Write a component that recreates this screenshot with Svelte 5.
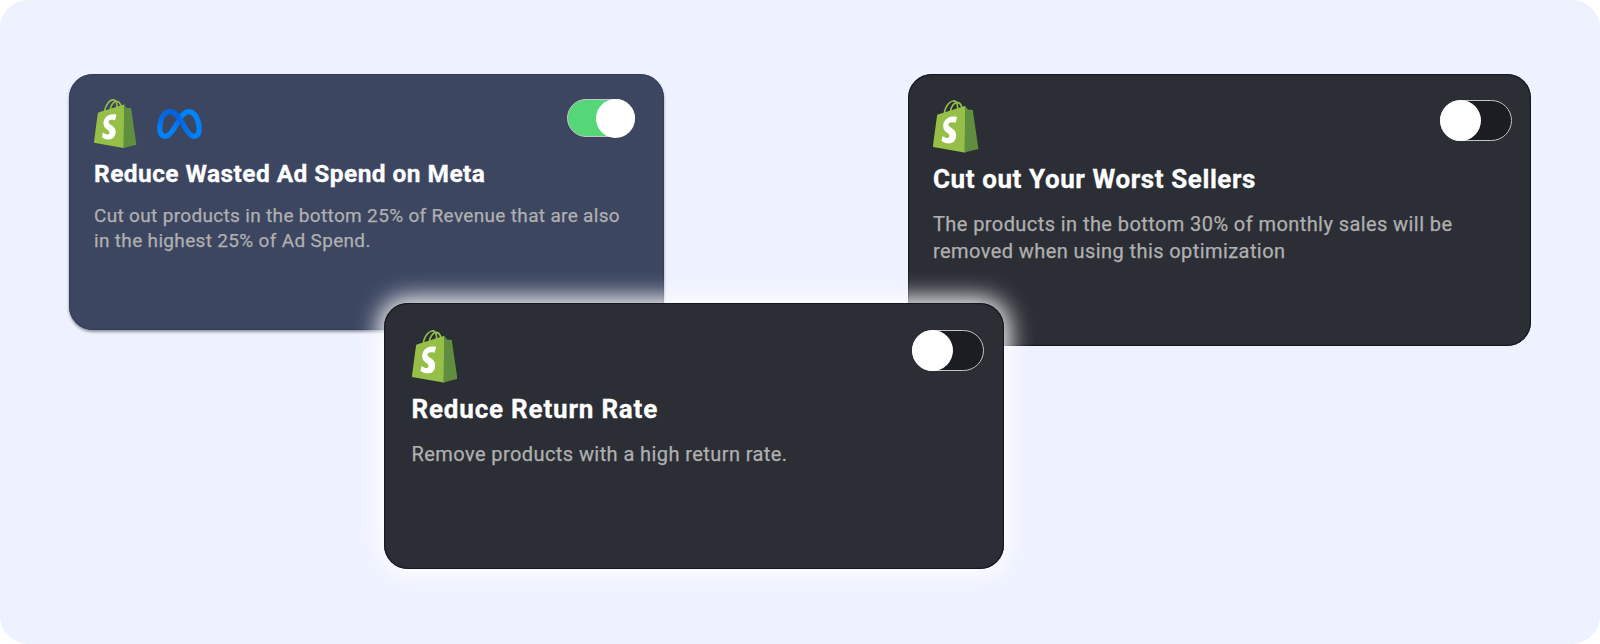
<script>
  const cards = [
    {
      id: 'meta',
      title: 'Reduce Wasted Ad Spend on Meta',
      lines: ['Cut out products in the bottom 25% of Revenue that are also', 'in the highest 25% of Ad Spend.'],
      meta: true,
      on: true
    },
    {
      id: 'sellers',
      title: 'Cut out Your Worst Sellers',
      lines: ['The products in the bottom 30% of monthly sales will be', 'removed when using this optimization'],
      meta: false,
      on: false
    },
    {
      id: 'returns',
      title: 'Reduce Return Rate',
      lines: ['Remove products with a high return rate.'],
      meta: false,
      on: false
    }
  ];

  let active = $state(Object.fromEntries(cards.map((c) => [c.id, c.on])));
</script>

{#snippet shopify()}
  <svg class="shopify" viewBox="0 0 109.5 124.5" preserveAspectRatio="none" aria-hidden="true">
    <path d="M20 36h41v69H18z" fill="#fff" />
    <path fill="#95bf47" d="M74.7,14.8c0,0-1.4,0.4-3.7,1.1c-0.4-1.3-1-2.8-1.8-4.4c-2.6-5-6.5-7.7-11.1-7.7c-0.3,0-0.6,0-1,0.1c-0.1-0.2-0.3-0.3-0.4-0.5c-2-2.2-4.6-3.2-7.7-3.1c-6,0.2-12,4.5-16.8,12.2c-3.4,5.4-6,12.2-6.7,17.5c-6.9,2.1-11.7,3.6-11.8,3.7c-3.5,1.1-3.6,1.2-4,4.5C9.1,40.7,0,111.2,0,111.2l75.6,13.1h2.8V14L74.7,14.8zM57.2,20.2c-4,1.2-8.4,2.6-12.7,3.9c1.2-4.7,3.6-9.4,6.4-12.5c1.1-1.1,2.6-2.4,4.3-3.2C56.9,12,57.3,16.9,57.2,20.2zM49.1,4.3c1.4,0,2.6,0.3,3.6,0.9c-1.6,0.8-3.2,2.1-4.7,3.6c-3.8,4.1-6.7,10.5-7.9,16.6c-3.6,1.1-7.2,2.2-10.5,3.2C31.7,19.1,39.8,4.6,49.1,4.3zM37.4,59.3c0.4,6.4,17.3,7.8,18.3,22.9c0.7,11.9-6.3,20-16.4,20.6c-12.2,0.8-18.9-6.4-18.9-6.4l2.6-11c0,0,6.7,5.1,12.1,4.7c3.5-0.2,4.8-3.1,4.7-5.1c-0.5-8.4-14.3-7.9-15.2-21.7C23.8,51.8,31.4,40.1,48.2,39c6.5-0.4,9.8,1.2,9.8,1.2l-3.8,14.4c0,0-4.3-2-9.4-1.6C37.4,53.5,37.3,58.2,37.4,59.3zM61.2,19c0-3-0.4-7.3-1.8-10.9c4.6,0.9,6.8,6,7.8,9.1C65.4,17.7,63.4,18.3,61.2,19z" />
    <path fill="#5e8e3e" d="M75.6,124.3l33.9-8.2c0,0-13.5-91.3-13.6-91.9c-0.1-0.6-0.6-1-1.1-1c-0.5,0-9.3-0.2-9.3-0.2s-5.4-5.2-7.4-7.2z" />
  </svg>
{/snippet}

{#snippet card(c)}
  <article class="card {c.id}">
    <header>
      <div class="icons">
        {@render shopify()}
        {#if c.meta}
          <svg class="meta-logo" viewBox="0 0 134 90" aria-hidden="true">
            <defs>
              <linearGradient id="loopLeft" x1="0" y1="0" x2="0" y2="1">
                <stop offset=".2" stop-color="#0668e1" />
                <stop offset=".75" stop-color="#0082fb" />
              </linearGradient>
              <linearGradient id="loopRight" x1="0" y1="0" x2="1" y2="0">
                <stop offset=".3" stop-color="#0064e0" />
                <stop offset=".85" stop-color="#0082fb" />
              </linearGradient>
            </defs>
            <path d="M68 30C76 16 84 8 95 8C112 8 126 32 126 60" stroke="#0082fb" />
            <path d="M68 30L48 62C40 75 34 82 24 82C13 82 8 73 8 58C8 30 20 8 39 8" stroke="url(#loopLeft)" />
            <path d="M38 8C52 8 61 19 74 40L86 60C95 75 101 82 110 82C121 82 126 74 126 60" stroke="url(#loopRight)" />
          </svg>
        {/if}
      </div>
      <button
        class="toggle"
        class:on={active[c.id]}
        role="switch"
        aria-checked={active[c.id]}
        aria-label={c.title}
        onclick={() => (active[c.id] = !active[c.id])}
      >
        <span class="knob"></span>
      </button>
    </header>
    <h2>{c.title}</h2>
    <p>{#each c.lines as line}<span>{line}</span>{/each}</p>
  </article>
{/snippet}

<main class="stage">
  {@render card(cards[0])}
  {@render card(cards[1])}
  {@render card(cards[2])}
</main>

<style>
  :global(body) { background: #fff; }

  .stage {
    position: relative;
    box-sizing: border-box;
    width: 1600px;
    height: 644px;
    padding: 74px 69px 0 68.5px;
    display: flex;
    justify-content: space-between;
    align-items: flex-start;
    background: #eef2ff;
    border-radius: 28px;
    overflow: hidden;
    font-family: Roboto, 'Open Sans', sans-serif;
  }

  .card {
    box-sizing: border-box;
    width: 623px;
    height: 272px;
    padding: 26px 19px 0 25px;
    border-radius: 24px;
    background: #2c2e36;
    box-shadow: inset 0 0 1px 1px #14161f;
  }
  .card.meta {
    width: 595.5px;
    height: 256px;
    padding: 25px 29px 0 25.5px;
    background: #3c4661;
    box-shadow: inset 0 0 1px .5px #2b3655, 0 2px 3px rgba(0, 0, 0, .4);
  }
  .card.returns {
    position: absolute;
    left: 384px;
    top: 303px;
    width: 620px;
    height: 266px;
    padding: 27px 20.5px 0 27.5px;
    box-shadow: inset 0 0 1px 1px #14161f, 0 0 24px 5px #fff;
  }

  header { display: flex; justify-content: space-between; align-items: flex-start; }
  .icons { display: flex; gap: 20.5px; }
  .shopify { display: block; width: 45.5px; height: 52.5px; margin-bottom: .5px; }
  .meta .shopify { width: 42.5px; height: 49px; margin-bottom: 1px; }
  .meta-logo { width: 45px; height: 30px; margin-top: 10px; fill: none; stroke-width: 15.5; }

  .toggle {
    box-sizing: border-box;
    width: 72px;
    height: 41px;
    padding: 0;
    display: flex;
    align-items: center;
    border: 1px solid #c4c4c4;
    border-radius: 21px;
    background: #1c1d23;
    cursor: pointer;
  }
  .knob { width: 41px; height: 41px; margin: -1px; border-radius: 50%; background: #fff; flex: none; }
  .toggle.on { justify-content: flex-end; background: #55d777; }
  .meta .toggle { width: 68px; height: 38px; }
  .meta .knob { width: 39px; height: 39px; }

  h2 {
    margin: 11px 0 0;
    font-size: 26px;
    line-height: 30px;
    font-weight: 700;
    letter-spacing: .59px;
    color: #fff;
    -webkit-text-stroke: .3px #fff;
    white-space: nowrap;
  }
  .returns h2 { letter-spacing: .81px; }
  p {
    margin: 17px 0 0;
    font-size: 20px;
    line-height: 27px;
    letter-spacing: .42px;
    color: #b0b0b0;
    -webkit-text-stroke: .25px #b0b0b0;
  }
  p span { display: block; white-space: nowrap; }
  .meta h2 { margin-top: 11px; font-size: 24.5px; line-height: 28px; letter-spacing: .43px; }
  .meta p { margin-top: 16px; font-size: 19px; line-height: 24.5px; letter-spacing: .33px; }
</style>
